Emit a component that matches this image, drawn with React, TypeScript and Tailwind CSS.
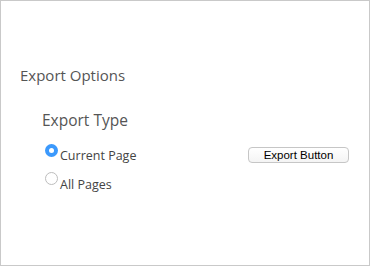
export default function App() {
  return (
    <div className="w-[370px] h-[266px] bg-white border border-[#c9c9c9] font-['Open_Sans',sans-serif] text-[#555]">
      {/* Export Options */}
      <div className="pl-[19px] pt-[64px]">
        <p className="text-[15px] leading-[20px]">Export Options</p>

        <div className="pl-[22px] pt-[24px]">
          <p className="text-[15.5px] leading-[22px]">Export Type</p>

          <div className="flex pt-[11px]">
            <div className="flex flex-col gap-[6px] w-[206px]">
              <label className="flex items-start">
                <span className="mt-[2px] ml-[3px] w-[13px] h-[13px] rounded-full bg-[#3b99fc] flex items-center justify-center shrink-0">
                  <span className="w-[5px] h-[5px] rounded-full bg-white" />
                </span>
                <span className="ml-[2px] text-[12.5px] leading-[18px] pt-[5px] text-[#444]">
                  Current Page
                </span>
              </label>
              <label className="flex items-start">
                <span className="mt-[1px] ml-[3px] w-[13px] h-[13px] rounded-full bg-white border border-[#bdbdbd] shrink-0" />
                <span className="ml-[2px] text-[12.5px] leading-[18px] pt-[5px] text-[#444]">
                  All Pages
                </span>
              </label>
            </div>

            <button className="mt-[5px] h-[16px] w-[101px] rounded-[4px] border border-[#c6c6c6] bg-gradient-to-b from-white to-[#f4f4f4] text-[11.5px] leading-[14px] text-black font-['Liberation_Sans',Arial,sans-serif] self-start">
              Export Button
            </button>
          </div>
        </div>
      </div>
    </div>
  );
}
